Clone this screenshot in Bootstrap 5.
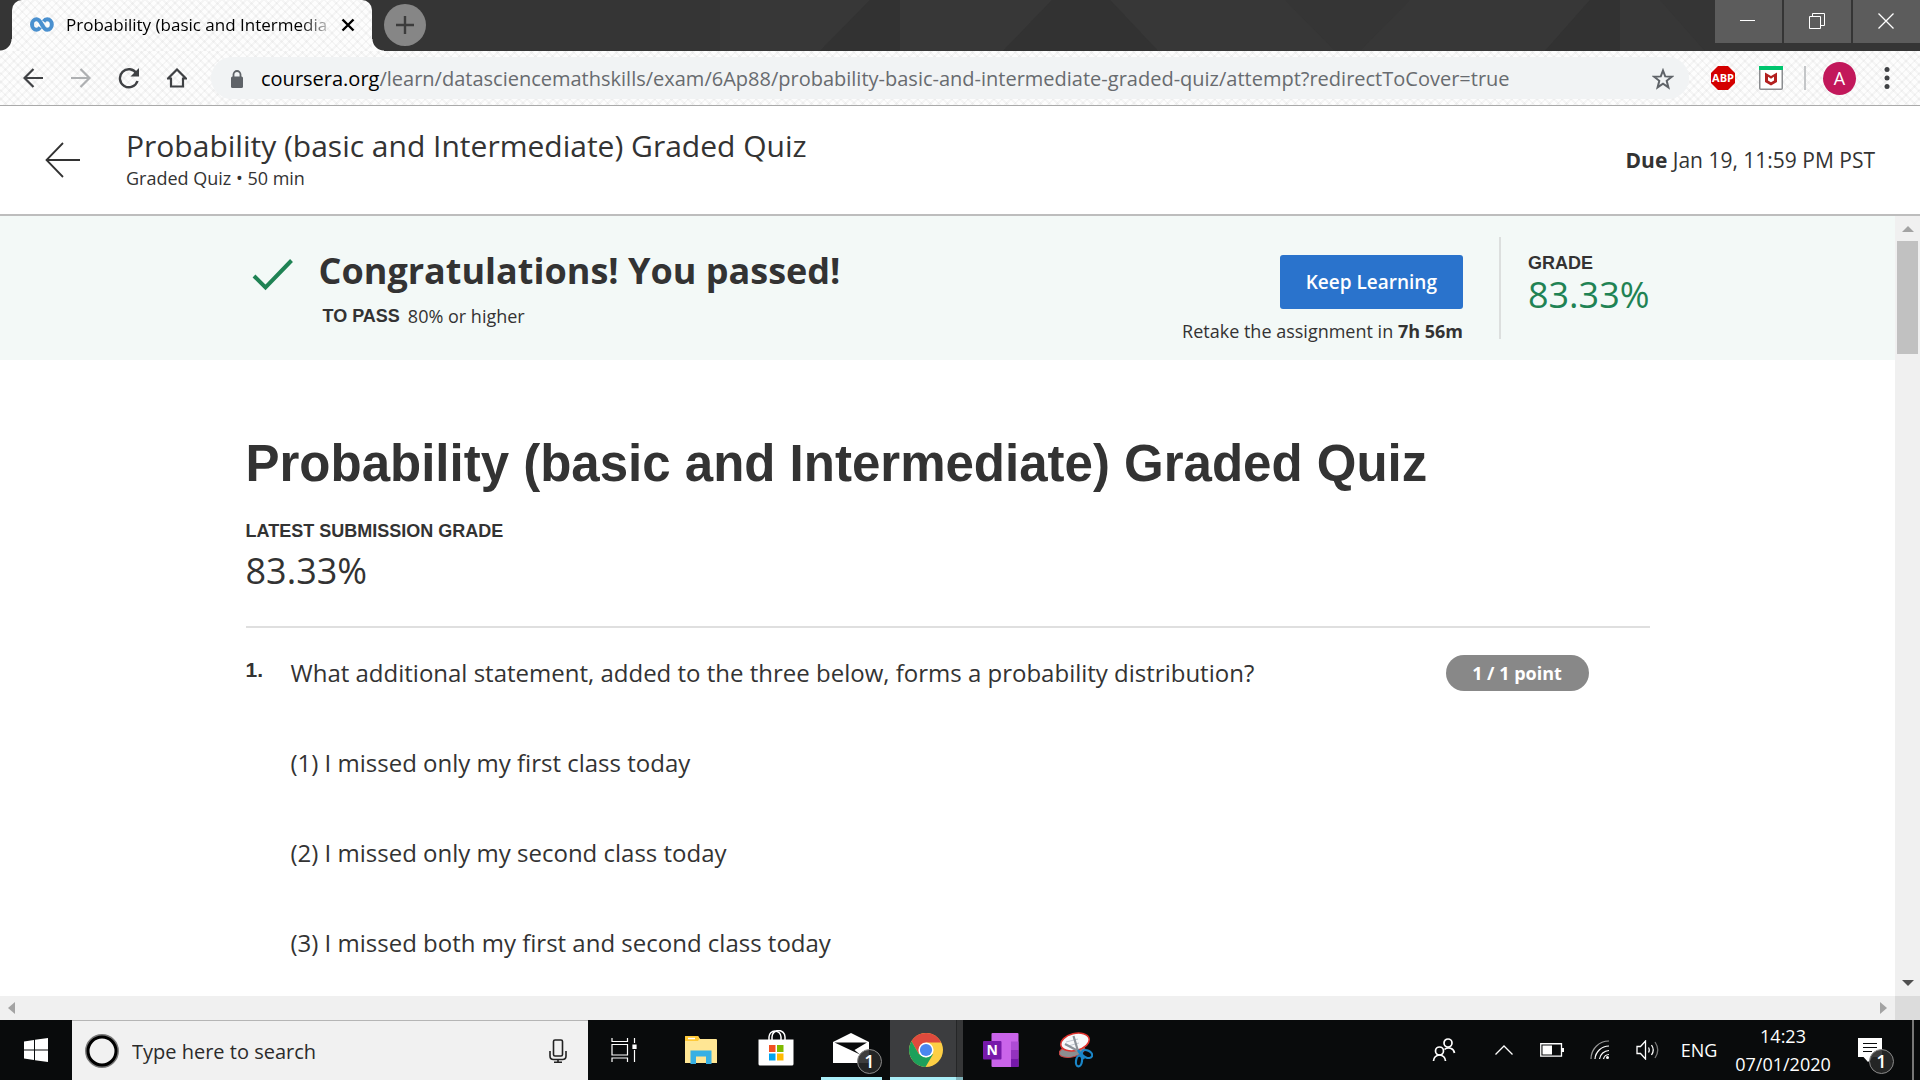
<!DOCTYPE html>
<html lang="en">
<head>
<meta charset="utf-8">
<meta name="viewport" content="width=device-width, initial-scale=1">
<title>Probability (basic and Intermediate) Graded Quiz</title>
<link href="https://cdn.jsdelivr.net/npm/bootstrap@5.3.0/dist/css/bootstrap.min.css" rel="stylesheet">
<style>
  :root { --ink: #333; --green: #1f8354; --arial: "Liberation Sans", Arial, sans-serif; --ui: "Open Sans", "Noto Sans", sans-serif; }
  body { font-family: var(--ui); color: var(--ink); height: 100vh; overflow: hidden; background: #fff; }
  svg { display: block; flex: none; }
  button { font-family: inherit; }
  .plain-btn { border: 0; padding: 0; background: none; color: inherit; display: flex; align-items: center; justify-content: center; flex: none; }

  /* woven light theme shared by the tab and the toolbar */
  .weave { background-color: #fdfdfd; background-image:
    repeating-linear-gradient(45deg, transparent 0 4px, rgba(0,0,0,.03) 4px 6px),
    repeating-linear-gradient(-45deg, transparent 0 4px, rgba(0,0,0,.03) 4px 6px); }
  .tab-strip { height: 51px; background: #353535; position: relative; }
  .strip-art { position: absolute; inset: 0; width: 100%; height: 100%; }
  .browser-tab { position: relative; width: 360px; margin-left: 12px; border-radius: 10px 10px 0 0; padding: 0 17px 2px 18px; height: 51px; }
  .browser-tab::before, .browser-tab::after { content: ""; position: absolute; bottom: 0; width: 12px; height: 12px; }
  .browser-tab::before { right: 100%; background: radial-gradient(circle at 0 0, transparent 11px, #fdfdfd 12px); }
  .browser-tab::after { left: 100%; background: radial-gradient(circle at 100% 0, transparent 11px, #fdfdfd 12px); }
  .tab-title { font-size: 17px; line-height: 24px; color: #000; white-space: nowrap;
    -webkit-mask-image: linear-gradient(90deg, #000 90%, rgba(0,0,0,.25)); mask-image: linear-gradient(90deg, #000 90%, rgba(0,0,0,.25)); }
  .new-tab { width: 42px; height: 42px; border-radius: 50%; background: #868686; margin-left: 12px; position: relative; }
  .win-btns { position: relative; gap: 2px; height: 43px; }
  .win-btns .plain-btn { width: 67px; background: #5c5c5c; color: #fff; padding: 0 2px 2px 0; }
  .toolbar { height: 55px; border-bottom: 1px solid #aaa; padding: 0 30px 0 9px; }
  .toolbar .nav-btn { width: 48px; height: 42px; }
  .address { height: 42px; border-radius: 21px; background: #f1f3f4; font-size: 20px; line-height: 28px; margin: 0 10px; padding: 2px 15px 0 19px; min-width: 0; }
  .address label { margin-left: 17px; }
  .address input, .task-search input { border: 0; background: none; outline: 0; padding: 0; min-width: 0; }
  .address input { color: #686b6f; }
  .bar-line { width: 2px; height: 24px; background: #c4c6c8; margin: 0 17px 0 21px; }
  .avatar { width: 33px; height: 33px; border-radius: 50%; background: #c2185b; color: #fff; font-size: 18px; }

  .quiz-head { height: 110px; border-bottom: 2px solid #bdbdbd; padding: 0 45px; }
  .quiz-head .title { font-size: 30px; line-height: 40px; font-weight: 400; margin: 0; }
  .head-text { margin-left: 45px; padding-bottom: 4px; }
  .small-copy { font-size: 18px; line-height: 24px; }
  .due { font-size: 21px; line-height: 28px; }
  .viewport { flex: 1 1 0; min-height: 0; }
  .sheet { max-width: 1404px; width: 100%; margin: 0 auto; }
  .result { background: #f3f9f7; height: 144px; padding-top: 21px; }
  .tick { margin: 22px 0 0 5px; }
  .congrats { font-size: 36px; line-height: 48px; font-weight: 700; margin: 10px 0 9px; }
  .caps { font-family: var(--arial); font-weight: 700; font-size: 18px; line-height: 24px; }
  .keep { background: #2a73cc; border: 0; border-radius: 3px; height: 54px; padding: 0 26px; font-size: 19px; font-weight: 600; margin: 18px 0 10px; }
  .keep:hover { background: #1f62b5; }
  .grade-box { border-left: 2px solid #dcdfde; height: 102px; padding: 14px 0 0 27px; margin-left: 36px; }
  .score { font-size: 36px; line-height: 40px; }
  .passed { color: var(--green); }
  .quiz-name { font-family: var(--arial); font-size: 51px; line-height: 60px; font-weight: 700; margin: 0 0 25px; padding-top: 74px; }
  .rule { border-top: 2px solid #dfdfdf; margin: 35px 0 27px; }
  .question { font-size: 24px; line-height: 36px; padding-right: 61px; }
  .question p { margin: 0 0 54px; }
  .q-num { font-family: var(--arial); font-size: 21px; line-height: 30px; font-weight: 700; width: 45px; }
  .points { background: #888; border-radius: 18px; height: 36px; font-size: 18px; line-height: 36px; font-weight: 700; color: #fff; width: 143px; text-align: center; }

  .v-scroll { width: 25px; background: #f0f0f0; padding: 10px 2px; }
  .v-thumb { height: 113px; background: #c1c1c1; margin-top: 9px; }
  .h-scroll { height: 24px; background: #f0f0f0; }
  .corner { width: 25px; height: 24px; background: #dcdcdc; }

  .taskbar { height: 60px; background: #090b0c; color: #fff; }
  .start { width: 72px; }
  .task-search { width: 516px; height: 60px; background: #f1f1f1; border-top: 1px solid #b5b5b5; padding: 0 21px 0 12px; }
  .task-search input { font-size: 20px; line-height: 28px; color: #2b2b2b; padding-top: 2px; }
  .task-search input::placeholder { color: #2b2b2b; opacity: 1; }
  .app { width: 75px; height: 60px; position: relative; }
  .app.open::after { content: ""; position: absolute; left: 8px; right: 6px; bottom: 0; height: 3px; background: #a9eef8; }
  .app.active { background: linear-gradient(90deg, transparent 2px, #3c3d3f 2px 68px, #252627 68px 69px, #353637 69px); }
  .app.active::after { left: 2px; right: 0; background: linear-gradient(90deg, #a9eef8 66px, #80b4bc 66px); }
  .count { position: absolute; width: 25px; height: 25px; border-radius: 50%; background: rgba(40,40,40,.9); border: 1px solid #8a8a8a; font-size: 18px; line-height: 23px; font-weight: 600; text-align: center; color: #fff; }
  .app .count { left: 44px; top: 29px; }
  .note .count { left: 29px; top: 29px; }
  .tray { font-size: 18px; line-height: 28px; }
  .tray .cell { width: 48px; height: 60px; }
  .tray .wide { width: 72px; }
  .tray .lang { width: 54px; }
  .tray .clock { width: 114px; flex-direction: column; }
  .tray .note { width: 60px; position: relative; }
  .show-desk { width: 8px; height: 60px; border-left: 2px solid #777; margin-left: 12px; }
</style>
<script src="https://cdn.jsdelivr.net/npm/bootstrap@5.3.0/dist/js/bootstrap.bundle.min.js"></script>
</head>
<body class="d-flex flex-column">

<header class="flex-shrink-0">
  <div class="tab-strip d-flex align-items-start">
    <svg class="strip-art" viewBox="0 0 1920 51" preserveAspectRatio="none" aria-hidden="true">
      <path fill="#373737" d="M720 0H870L820 51H720ZM900 0H1052L1003 51H900ZM1110 0H1285L1335 51H1158ZM1410 0H1590L1545 51H1360ZM1620 0H1660L1705 51H1620Z"/>
      <path fill="#323232" d="M870 0H900V51H820ZM1052 0H1110L1158 51H1003ZM1590 0H1620V51H1545Z"/>
    </svg>
    <div class="browser-tab weave d-flex align-items-center">
      <svg width="24" height="15" viewBox="0 0 24 15" fill="none" stroke="#4a90cf" stroke-width="4"><path d="M10.200 10.300C9 12 7.800 12.700 6.600 12.700A4.600 5.200 0 0 1 6.600 2.300C11.700 2.300 12 12.700 17.200 12.700A4.600 5.200 0 0 0 17.200 2.300C15.900 2.300 14.700 2.900 13.600 4.500"/></svg>
      <div class="tab-title ms-2 ps-1">Probability (basic and Intermedia</div>
      <button class="plain-btn ms-auto" aria-label="Close tab"><svg width="14" height="14" viewBox="0 0 14 14" stroke="#000" stroke-width="2.400"><path d="M1.500 1.500 12.500 12.500M12.500 1.500 1.500 12.500"/></svg></button>
    </div>
    <button class="new-tab plain-btn mt-1" aria-label="New tab"><svg width="18" height="18" viewBox="0 0 18 18" stroke="#3c3c3c" stroke-width="2.400"><path d="M9 0V18M0 9H18"/></svg></button>
    <div class="win-btns d-flex ms-auto">
      <button class="plain-btn" aria-label="Minimize"><svg width="16" height="16" viewBox="0 0 16 16" stroke="#fff"><path d="M0 7.500H15"/></svg></button>
      <button class="plain-btn" aria-label="Restore"><svg width="16" height="16" viewBox="0 0 16 16" fill="none" stroke="#fff"><path d="M.5 3.500H11.500V15.500H.5ZM3.500 3.500V.5H15.500V12.500H11.500"/></svg></button>
      <button class="plain-btn" aria-label="Close"><svg width="16" height="16" viewBox="0 0 16 16" stroke="#fff" stroke-width="1.300"><path d="M.5.5 15.500 15.500M15.500.5.5 15.500"/></svg></button>
    </div>
  </div>
  <div class="toolbar weave d-flex align-items-center">
    <button class="plain-btn nav-btn" aria-label="Back"><svg width="20" height="20" viewBox="0 0 20 20" fill="none" stroke="#3f4144" stroke-width="2.200"><path d="M20 10H2M10.500 1 1.500 10 10.500 19"/></svg></button>
    <button class="plain-btn nav-btn" aria-label="Forward"><svg width="20" height="20" viewBox="0 0 20 20" fill="none" stroke="#aeb0b2" stroke-width="2.200"><path d="M0 10H18M9.500 1 18.500 10 9.500 19"/></svg></button>
    <button class="plain-btn nav-btn" aria-label="Reload"><svg width="22" height="22" viewBox="0 0 22 22"><path d="M18.600 6.500A9 9 0 1 0 19.500 14" fill="none" stroke="#3f4144" stroke-width="2.400"/><path d="M21 1V9.500H12.500Z" fill="#3f4144"/></svg></button>
    <button class="plain-btn nav-btn" aria-label="Home"><svg width="20" height="20" viewBox="0 0 20 20" fill="none" stroke="#3f4144" stroke-width="2.200"><path d="M1 10.500 10 1.500 19 10.500H16V18.500H4V10.500Z"/></svg></button>
    <div class="address d-flex align-items-center flex-grow-1">
      <svg width="14" height="18" viewBox="0 0 14 18"><path d="M3.500 7V4.500A3.500 3.500 0 0 1 10.500 4.500V7" fill="none" stroke="#5f6368" stroke-width="1.800"/><rect x="1" y="6.500" width="12" height="11.500" rx="1.500" fill="#5f6368"/></svg>
      <label for="url" class="text-black">coursera.org</label>
      <input id="url" class="flex-grow-1" value="/learn/datasciencemathskills/exam/6Ap88/probability-basic-and-intermediate-graded-quiz/attempt?redirectToCover=true">
      <button class="plain-btn" aria-label="Bookmark"><svg width="22" height="22" viewBox="0 0 22 22" fill="none" stroke="#5f6368" stroke-width="2"><path d="M11 2.500 13.200 8.400 19.800 8.700 14.700 12.800 16.400 19.400 11 15.700 5.600 19.400 7.300 12.800 2.200 8.700 8.800 8.400Z"/></svg></button>
    </div>
    <button class="plain-btn ms-2 me-4 ps-1" aria-label="Adblock Plus"><svg width="24" height="24" viewBox="0 0 24 24"><path d="M7 0H17L24 7V17L17 24H7L0 17V7Z" fill="#d40000"/><text x="12" y="16" text-anchor="middle" font-family="Open Sans, sans-serif" font-weight="700" font-size="11" fill="#fff">ABP</text></svg></button>
    <button class="plain-btn" aria-label="McAfee WebAdvisor"><svg width="24" height="24" viewBox="0 0 24 24"><rect x=".75" y=".75" width="22.500" height="22.500" rx="1" fill="#fff" stroke="#8b8d90" stroke-width="1.500"/><path d="M0 0H24V4H0Z" fill="#00c56e"/><path d="M6 6.500 12 10 18 6.500V16L12 19.500 6 16ZM9 10.800V14.500L12 16.200 15 14.500V10.800L12 12.800Z" fill="#b3201f" fill-rule="evenodd"/></svg></button>
    <div class="bar-line"></div>
    <button class="plain-btn avatar" aria-label="Profile">A</button>
    <button class="plain-btn ms-4 ps-1" aria-label="Menu"><svg width="6" height="22" viewBox="0 0 6 22" fill="#3f4144"><circle cx="3" cy="2.500" r="2.500"/><circle cx="3" cy="11" r="2.500"/><circle cx="3" cy="19.500" r="2.500"/></svg></button>
  </div>
</header>

<div class="quiz-head d-flex align-items-center flex-shrink-0">
  <a href="#" aria-label="Back to course"><svg width="36" height="36" viewBox="0 0 36 36" fill="none" stroke="#333" stroke-width="1.800"><path d="M35 18H2M18 1 1.500 18 18 35"/></svg></a>
  <div class="head-text">
    <h1 class="title">Probability (basic and Intermediate) Graded Quiz</h1>
    <div class="small-copy">Graded Quiz • 50 min</div>
  </div>
  <div class="due ms-auto"><b>Due</b> Jan 19, 11:59 PM PST</div>
</div>

<div class="viewport d-flex overflow-hidden">
  <main class="flex-grow-1 overflow-hidden">
    <section class="result">
      <div class="sheet d-flex">
        <svg class="tick" width="44" height="34" viewBox="0 0 44 34" fill="none" stroke="#1f8354" stroke-width="4"><path d="M3 17 14.500 28.500 40.500 1.500"/></svg>
        <div class="ms-4">
          <h2 class="congrats">Congratulations! You passed!</h2>
          <div class="ms-1 d-flex"><span class="caps">TO PASS</span><span class="small-copy ms-2">80% or higher</span></div>
        </div>
        <div class="ms-auto d-flex flex-column align-items-end">
          <button class="btn btn-primary keep">Keep Learning</button>
          <div class="small-copy">Retake the assignment in <b>7h 56m</b></div>
        </div>
        <div class="grade-box">
          <div class="caps">GRADE</div>
          <div class="score passed">83.33%</div>
        </div>
      </div>
    </section>
    <section class="sheet">
      <h2 class="quiz-name">Probability (basic and Intermediate) Graded Quiz</h2>
      <div class="caps">LATEST SUBMISSION GRADE</div>
      <div class="score mt-2">83.33%</div>
      <div class="rule"></div>
      <div class="question d-flex align-items-start">
        <div class="q-num">1.</div>
        <div>
          <p>What additional statement, added to the three below, forms a probability distribution?</p>
          <p>(1) I missed only my first class today</p>
          <p>(2) I missed only my second class today</p>
          <p>(3) I missed both my first and second class today</p>
        </div>
        <div class="points ms-auto">1 / 1 point</div>
      </div>
    </section>
  </main>
  <div class="v-scroll d-flex flex-column">
    <svg class="mx-auto" width="12" height="6" viewBox="0 0 12 6"><path d="M6 0 12 6H0Z" fill="#a3a3a3"/></svg>
    <div class="v-thumb"></div>
    <svg class="mt-auto mx-auto" width="12" height="6" viewBox="0 0 12 6"><path d="M0 0H12L6 6Z" fill="#505050"/></svg>
  </div>
</div>
<div class="h-scroll d-flex align-items-center flex-shrink-0">
  <svg class="ms-2" width="7" height="12" viewBox="0 0 7 12"><path d="M7 0V12L0 6Z" fill="#a3a3a3"/></svg>
  <svg class="ms-auto me-2" width="7" height="12" viewBox="0 0 7 12"><path d="M0 0 7 6 0 12Z" fill="#a3a3a3"/></svg>
  <div class="corner"></div>
</div>

<footer class="taskbar d-flex flex-shrink-0">
  <button class="plain-btn start" aria-label="Start"><svg width="24" height="24" viewBox="0 0 24 24" fill="#fff"><path d="M0 3.400 10 2V11.400H0ZM11 1.800 24 0V11.400H11ZM0 12.500H10V22L0 20.600ZM11 12.500H24V24L11 22.200Z"/></svg></button>
  <div class="task-search d-flex align-items-center">
    <svg width="36" height="36" viewBox="0 0 36 36" fill="none"><circle cx="18" cy="18" r="15.700" stroke="#777" stroke-width="2.500"/><circle cx="18" cy="18" r="14" stroke="#000" stroke-width="3"/></svg>
    <input class="flex-grow-1 ms-2 ps-1" type="text" aria-label="Type here to search" placeholder="Type here to search">
    <button class="plain-btn" aria-label="Voice search"><svg width="18" height="24" viewBox="0 0 18 24" fill="none" stroke="#222" stroke-width="1.600"><rect x="4.500" y="1" width="9" height="16" rx="1.500"/><path d="M1 12V17Q1 20.500 4.500 20.500H13.500Q17 20.500 17 17V12M9 20.500V23M5 23.200H13"/></svg></button>
  </div>
  <button class="plain-btn app pe-1" aria-label="Task view"><svg width="26" height="24" viewBox="0 0 26 24" fill="none" stroke="#fff" stroke-width="1.200"><path d="M1 0V3.500H16.500V0M1 6.500H16.500V17H1ZM1 24V20H16.500V24M23.500 0V5M23.500 12V24"/><path d="M22 7H25V10.500H22Z" fill="#fff"/></svg></button>
  <button class="plain-btn app" aria-label="File Explorer"><svg width="32" height="28" viewBox="0 0 32 28"><path d="M0 1Q0 0 1 0H13L15 3H31Q32 3 32 4V27H0Z" fill="#ffe694"/><path d="M0 1Q0 0 1 0H13L14.500 2.500 13 5H0Z" fill="#ffc937"/><path d="M3 2.500H10" stroke="#fff" stroke-width="1.500"/><path d="M5.500 14.500H26.500V28H21V20.500H11V28H5.500Z" fill="#37b0e4"/></svg></button>
  <button class="plain-btn app" aria-label="Microsoft Store"><svg class="mb-1" width="36" height="36" viewBox="0 0 36 36"><path d="M11 10V7A6 6 0 0 1 23 7V10M14 10V7A6 6 0 0 1 27 7V10" fill="none" stroke="#fff" stroke-width="1.500"/><path d="M.5 9.500H35.500V34Q35.500 35.500 34 35.500H2Q.5 35.500.5 34Z" fill="#fff"/><path d="M11 15H17.500V22H11Z" fill="#f25022"/><path d="M19 15H25.500V22H19Z" fill="#7fba00"/><path d="M11 23.500H17.500V30.500H11Z" fill="#00a4ef"/><path d="M19 23.500H25.500V30.500H19Z" fill="#ffb900"/></svg></button>
  <button class="plain-btn app open" aria-label="Mail, 1 new message"><svg class="mb-1" width="36" height="30" viewBox="0 0 36 30"><path d="M0 9 18 0 36 9V30H0Z" fill="#fff"/><path d="M1.500 9.500H34L21.500 17 27 21.500Z" fill="#090b0c"/></svg><span class="count">1</span></button>
  <button class="plain-btn app open active" aria-label="Google Chrome"><svg width="34" height="34" viewBox="0 0 34 34"><circle cx="17" cy="17" r="17" fill="#fdcf45"/><path d="M17 0A17 17 0 0 0 2.500 8.200L9.800 21 17 9.500H32.300A17 17 0 0 0 17 0Z" fill="#df4a3d"/><path d="M2.500 8.200A17 17 0 0 0 16.500 34L24.200 21 17 24.500 9.800 21Z" fill="#1da05b"/><circle cx="17" cy="17" r="7.600" fill="#fff"/><circle cx="17" cy="17" r="6.100" fill="#4a87ef"/></svg></button>
  <button class="plain-btn app" aria-label="OneNote"><svg width="36" height="34" viewBox="0 0 36 34"><rect x="8.500" width="27" height="34" rx="1" fill="#ca64ea"/><path d="M28 8.500H35.500V17H28Z" fill="#ae4bd5"/><path d="M28 17H35.500V25.500H28Z" fill="#9332bf"/><path d="M28 25.500H35.500V34H28Z" fill="#7719aa"/><rect y="8" width="18.500" height="18.500" rx="1" fill="#7719aa"/><text x="9.200" y="22" text-anchor="middle" font-family="Open Sans, sans-serif" font-weight="700" font-size="14" fill="#fff">N</text></svg></button>
  <button class="plain-btn app" aria-label="Snipping Tool"><svg width="34" height="36" viewBox="0 0 34 36" fill="none"><ellipse cx="13" cy="19" rx="13" ry="6" fill="#8c8e90" stroke="#c44" stroke-width="1" transform="rotate(-12 13 19)"/><ellipse cx="16" cy="10" rx="14.500" ry="8.500" fill="#f7f8fa" stroke="#e0322d" stroke-width="1.600" transform="rotate(-14 16 10)"/><path d="M7 10 19 7M9 14 20 11" stroke="#c3c9d2" stroke-width="1"/><path d="M14.500 4 19 19M6 12 21 20" stroke="#8c9299" stroke-width="2.200"/><ellipse cx="20" cy="29" rx="3" ry="5.500" stroke="#1a86c8" stroke-width="2.200" transform="rotate(8 20 29)"/><ellipse cx="28" cy="22" rx="5.500" ry="3.500" stroke="#1a86c8" stroke-width="2.200" transform="rotate(25 28 22)"/><path d="M19 18 25 27" stroke="#1a86c8" stroke-width="2.500"/></svg></button>

  <div class="tray d-flex ms-auto">
    <button class="plain-btn cell wide" aria-label="People"><svg width="24" height="24" viewBox="0 0 24 24" fill="none" stroke="#fff" stroke-width="1.700"><circle cx="16" cy="5" r="4"/><circle cx="7.500" cy="13" r="4"/><path d="M1.500 23A6 6 0 0 1 13.500 23M12.500 11.500A6 6 0 0 1 22.500 15"/></svg></button>
    <button class="plain-btn cell" aria-label="Show hidden icons"><svg width="18" height="10" viewBox="0 0 18 10" fill="none" stroke="#fff" stroke-width="1.300"><path d="M.5 9.500 9 1 17.500 9.500"/></svg></button>
    <button class="plain-btn cell" aria-label="Battery"><svg width="24" height="14" viewBox="0 0 24 14"><path d="M.75.75H21.500V13.200H.75Z" fill="none" stroke="#fff" stroke-width="1.300"/><path d="M2.500 2.500H12V11.500H2.500ZM22 5H24V9H22Z" fill="#fff"/></svg></button>
    <button class="plain-btn cell" aria-label="Wi-Fi"><svg width="20" height="20" viewBox="0 0 20 20" fill="none" stroke="#fff" stroke-width="1.200"><path d="M1 19A18 18 0 0 1 19 1" stroke="#999"/><path d="M5 19A14 14 0 0 1 19 6M9.500 19A10 10 0 0 1 19 10.500M13.500 19A6 6 0 0 1 19 14.500"/><circle cx="17.500" cy="17.500" r="1.500" fill="#fff" stroke="none"/></svg></button>
    <button class="plain-btn cell" aria-label="Volume"><svg width="24" height="20" viewBox="0 0 24 20" fill="none" stroke="#fff" stroke-width="1.300"><path d="M1 6.500H4.500L9.500 1V19L4.500 13.500H1ZM12.500 7.500Q14 10 12.500 12.500M15.500 5Q19 10 15.500 15"/><path d="M19 2Q24.500 10 19 18" stroke="#777"/></svg></button>
    <button class="plain-btn cell lang">ENG</button>
    <button class="plain-btn cell clock"><span>14:23</span><span>07/01/2020</span></button>
    <button class="plain-btn cell note" aria-label="Notifications, 1 new"><svg width="24" height="24" viewBox="0 0 24 24"><path d="M0 0H24V19H15L10 24 5.500 19H0Z" fill="#fff"/><path d="M5 5.500H19M5 9.500H19M5 13.500H14" stroke="#090b0c" stroke-width="1.200"/></svg><span class="count">1</span></button>
    <button class="plain-btn show-desk" aria-label="Show desktop"></button>
  </div>
</footer>
</body>
</html>
